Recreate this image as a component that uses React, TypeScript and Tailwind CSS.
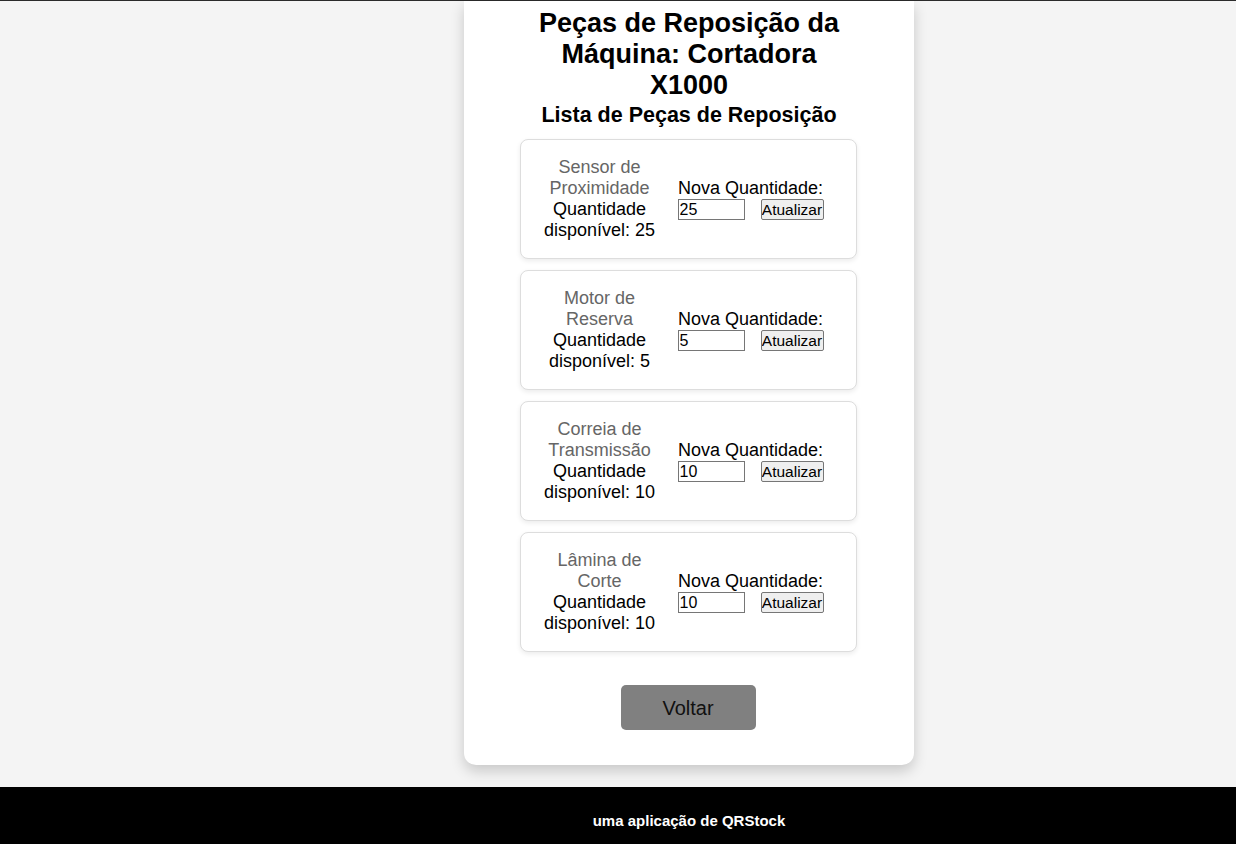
import React from "react";

const parts = [
  { name: "Sensor de Proximidade", qty: 25 },
  { name: "Motor de Reserva", qty: 5 },
  { name: "Correia de Transmissão", qty: 10 },
  { name: "Lâmina de Corte", qty: 10 },
];

export default function App() {
  return (
    <div
      className="min-h-[844px] flex flex-col bg-[#f4f4f4] text-black text-[18px]"
      style={{ fontFamily: '"Liberation Sans", Arial, sans-serif' }}
    >
      <div className="h-[1px] bg-[#2b2b2b]" />
      <main className="flex-1 flex justify-center pl-[142px]">
        <div className="w-[450px] h-[764px] bg-white rounded-b-[12px] shadow-[0_6px_14px_rgba(0,0,0,0.18)] pt-[7px] px-[20px] flex flex-col items-center">
          <h1 className="w-[310px] text-center font-bold text-[27px] leading-[31px]">
            Peças de Reposição da Máquina: Cortadora X1000
          </h1>
          <h2 className="mt-[4px] text-center font-bold text-[21.5px] leading-[21px]">
            Lista de Peças de Reposição
          </h2>
          <div className="mt-[13px] flex flex-col gap-[11px] -translate-x-[1px]">
            {parts.map((p) => (
              <div
                key={p.name}
                className="w-[337px] h-[120px] border border-[#dddddd] rounded-[8px] bg-white shadow-[0_2px_5px_rgba(0,0,0,0.08)] flex items-center pl-[19px]"
              >
                <div className="w-[120px] text-center leading-[21px]">
                  <div className="text-[#666666]">{p.name}</div>
                  <div>Quantidade disponível: {p.qty}</div>
                </div>
                <div className="ml-[18px] w-[146px] leading-[21px]">
                  <div className="text-center">Nova Quantidade:</div>
                  <div className="flex items-center justify-between">
                    <input
                      defaultValue={String(p.qty)}
                      className="w-[67px] h-[21px] border border-[#767676] px-[1px] text-[16px] leading-[19px] bg-white text-black outline-none"
                      style={{ fontFamily: '"Liberation Sans", Arial, sans-serif' }}
                    />
                    <button
                      className="w-[63px] h-[21px] border border-[#767676] rounded-[2px] bg-[#efefef] px-0 text-[15.5px] leading-[19px] text-black whitespace-nowrap overflow-hidden"
                      style={{ fontFamily: '"Liberation Sans", Arial, sans-serif' }}
                    >
                      Atualizar
                    </button>
                  </div>
                </div>
              </div>
            ))}
          </div>
          <button className="mt-[33px] w-[135px] h-[45px] bg-[#808080] rounded-[5px] text-[20px] text-[#111111] -translate-x-[1px]">
            Voltar
          </button>
        </div>
      </main>
      <footer className="h-[57px] bg-black text-white font-bold text-[15px] flex items-center justify-center pt-[12px] pl-[142px]">
        uma aplicação de QRStock
      </footer>
    </div>
  );
}
